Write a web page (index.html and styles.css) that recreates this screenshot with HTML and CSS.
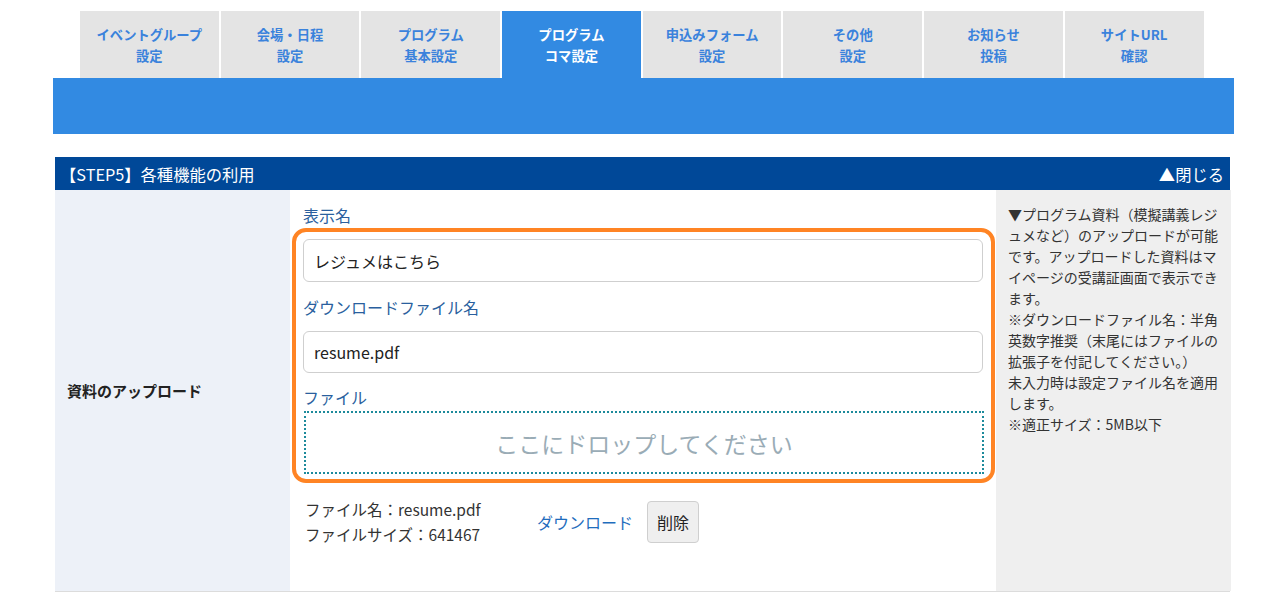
FILE: index.html
```html
<!DOCTYPE html>
<html>
<head>
  <meta charset="utf-8">
  <title>プログラムコマ設定</title>
  <link rel="stylesheet" href="styles.css">
</head>
<body>

  <div class="top-nav">
    <div class="tabs">
      <a class="tab">イベントグループ<br>設定</a>
      <a class="tab">会場・日程<br>設定</a>
      <a class="tab">プログラム<br>基本設定</a>
      <a class="tab active">プログラム<br>コマ設定</a>
      <a class="tab">申込みフォーム<br>設定</a>
      <a class="tab">その他<br>設定</a>
      <a class="tab">お知らせ<br>投稿</a>
      <a class="tab">サイトURL<br>確認</a>
    </div>
    <div class="tab-bar"></div>
  </div>

  <div class="section">
    <div class="section-head">
      <span>【STEP5】各種機能の利用</span>
      <a class="close">▲閉じる</a>
    </div>

    <div class="row">
      <div class="row-label">資料のアップロード</div>

      <div class="row-body">
        <div class="field-label">表示名</div>
        <input class="text-input first" type="text" value="レジュメはこちら">

        <div class="field-label">ダウンロードファイル名</div>
        <input class="text-input" type="text" value="resume.pdf">

        <div class="field-label file-label">ファイル</div>
        <div class="drop-zone">ここにドロップしてください</div>

        <div class="file-row">
          <div class="file-info">
            <div>ファイル名：resume.pdf</div>
            <div>ファイルサイズ：641467</div>
          </div>
          <a class="download">ダウンロード</a>
          <button class="delete-btn">削除</button>
        </div>

        <div class="highlight"></div>
      </div>

      <div class="row-note">
        ▼プログラム資料（模擬講義レジュメなど）のアップロードが可能です。アップロードした資料はマイページの受講証画面で表示できます。<br>
        ※ダウンロードファイル名：半角英数字推奨（末尾にはファイルの拡張子を付記してください。）<br>
        未入力時は設定ファイル名を適用します。<br>
        ※適正サイズ：5MB以下
      </div>
    </div>
  </div>

</body>
</html>
```

FILE: styles.css
```css
body {
  font-family: "Noto Sans CJK JP", "Noto Sans", sans-serif;
  background: #fff;
  color: #333;
  margin: 0;
}

.top-nav {
  width: 1181px;
  margin-left: 53px;
  padding-top: 11px;
}

.tabs {
  display: flex;
  gap: 2px;
  padding-left: 27px;
}

.tab {
  flex: 0 0 138.7px;
  height: 67px;
  display: flex;
  align-items: center;
  justify-content: center;
  text-align: center;
  background: #e4e4e4;
  color: #3a82dc;
  font-size: 13.3px;
  font-weight: 700;
  line-height: 21px;
}

.tab.active {
  background: #328ae2;
  color: #fff;
}

.tab-bar {
  height: 56px;
  background: #328ae2;
}

.section {
  width: 1175px;
  margin: 23px 0 0 55px;
}

.section-head {
  display: flex;
  justify-content: space-between;
  align-items: center;
  height: 33px;
  padding: 0 6px 0 5px;
  background: #004898;
  color: #fff;
  font-size: 16.3px;
}

.row {
  display: flex;
  border-bottom: 1px solid #dcdcdc;
}

.row-label {
  flex: 0 0 235px;
  box-sizing: border-box;
  display: flex;
  align-items: center;
  padding-left: 12px;
  background: #edf1f8;
  font-size: 15px;
  font-weight: 700;
  color: #222;
}

.row-body {
  position: relative;
  flex: 0 0 705px;
  box-sizing: border-box;
  padding: 13px 12px 44px 13px;
}

.field-label {
  font-size: 16px;
  line-height: 24px;
  color: #2a5f9e;
  margin-top: 13px;
}

.field-label:first-child {
  margin-top: 0;
}

.text-input {
  display: block;
  box-sizing: border-box;
  width: 680px;
  height: 42px;
  margin-top: 12px;
  padding: 0 10px;
  border: 1px solid #cfcfcf;
  border-radius: 6px;
  font-family: inherit;
  font-size: 16px;
  color: #222;
  background: #fff;
}

.text-input.first {
  height: 43px;
}

.file-label {
  margin-top: 12px;
}

.drop-zone {
  box-sizing: border-box;
  width: 680px;
  height: 63px;
  margin: 2px 0 0 1px;
  border: 2px dotted #1d8a9b;
  display: flex;
  align-items: center;
  justify-content: center;
  font-size: 23px;
  color: #9aacb6;
}

.file-row {
  display: flex;
  align-items: center;
  margin-top: 23px;
}

.file-info {
  flex: 0 0 234px;
  padding-left: 2px;
  box-sizing: border-box;
  font-size: 15.5px;
  line-height: 25px;
  color: #333;
}

.download {
  font-size: 16px;
  color: #1f6dbd;
  margin-right: 14px;
}

.delete-btn {
  height: 42px;
  padding: 0 9px;
  border: 1px solid #cfcfcf;
  border-radius: 4px;
  background: #efefef;
  font-family: inherit;
  font-size: 16px;
  color: #222;
}

.highlight {
  position: absolute;
  left: 2px;
  top: 38px;
  width: 703px;
  height: 255px;
  box-sizing: border-box;
  border: 4px solid #ff8424;
  border-radius: 14px;
  pointer-events: none;
}

.row-note {
  flex: 0 0 235px;
  box-sizing: border-box;
  padding: 14px 10px 0 12px;
  background: #efefef;
  font-size: 14px;
  line-height: 21px;
  color: #333;
}
```
